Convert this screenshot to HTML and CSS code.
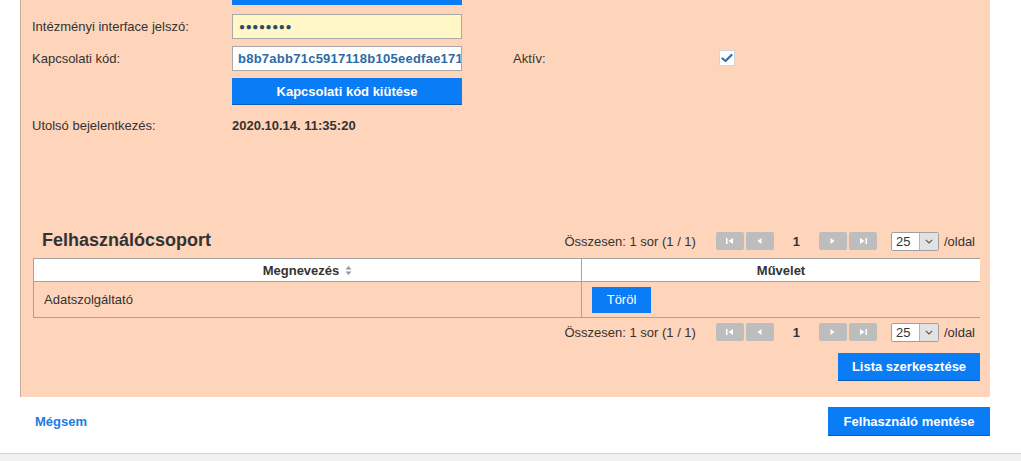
FILE: index.html
```html
<!DOCTYPE html>
<html lang="hu">
<head>
<meta charset="utf-8">
<title>Felhasználó</title>
<link rel="stylesheet" href="styles.css">
</head>
<body>
<div class="panel">
  <div class="form">
    <div class="row row-top">
      <div class="label"></div>
      <div class="top-btn"></div>
    </div>
    <div class="row row-pw">
      <div class="label">Intézményi interface jelszó:</div>
      <div class="input input-pw">●●●●●●●●</div>
    </div>
    <div class="row row-code">
      <div class="label">Kapcsolati kód:</div>
      <div class="input input-code">b8b7abb71c5917118b105eedfae171a</div>
      <div class="label label-aktiv">Aktív:</div>
      <div class="checkbox"><svg width="12" height="10" viewBox="0 0 12 10"><path d="M1.5 5.5 L4.5 8 L10.5 2" fill="none" stroke="#2f6db5" stroke-width="2.2" stroke-linecap="round" stroke-linejoin="round"/></svg></div>
    </div>
    <div class="row row-btn">
      <div class="label"></div>
      <div class="btn btn-wide">Kapcsolati kód kiütése</div>
    </div>
    <div class="row row-last">
      <div class="label">Utolsó bejelentkezés:</div>
      <div class="value">2020.10.14. 11:35:20</div>
    </div>
  </div>

  <div class="group">
    <div class="group-head">
      <h2 class="title">Felhasználócsoport</h2>
      <div class="pager">
        <span class="total">Összesen: 1 sor (1 / 1)</span>
        <span class="pbtns">
          <span class="pbtn"><svg width="8" height="6" viewBox="0 0 8 6"><rect x="0" y="0" width="1.5" height="6" fill="#fff"/><path d="M7 0 L2.5 3 L7 6 Z" fill="#fff"/></svg></span>
          <span class="pbtn"><svg width="5" height="6" viewBox="0 0 5 6"><path d="M4.5 0 L0.5 3 L4.5 6 Z" fill="#fff"/></svg></span>
        </span>
        <span class="page">1</span>
        <span class="pbtns">
          <span class="pbtn"><svg width="5" height="6" viewBox="0 0 5 6"><path d="M0.5 0 L4.5 3 L0.5 6 Z" fill="#fff"/></svg></span>
          <span class="pbtn"><svg width="8" height="6" viewBox="0 0 8 6"><path d="M1 0 L5.5 3 L1 6 Z" fill="#fff"/><rect x="6.5" y="0" width="1.5" height="6" fill="#fff"/></svg></span>
        </span>
        <span class="select"><span class="sel-val">25</span><span class="sel-arrow"><svg width="8" height="5" viewBox="0 0 8 5"><path d="M0.8 0.8 L4 4 L7.2 0.8" fill="none" stroke="#555" stroke-width="1.1"/></svg></span></span>
        <span class="per">/oldal</span>
      </div>
    </div>

    <div class="table">
      <div class="tr th">
        <div class="td col1">Megnevezés <svg class="sort" width="7" height="9" viewBox="0 0 7 9"><path d="M3.5 0 L6.5 3.5 L0.5 3.5 Z M0.5 5.5 L6.5 5.5 L3.5 9 Z" fill="#999"/></svg></div>
        <div class="td col2">Művelet</div>
      </div>
      <div class="tr trow">
        <div class="td col1">Adatszolgáltató</div>
        <div class="td col2"><span class="btn btn-small">Töröl</span></div>
      </div>
    </div>

    <div class="pager pager-bottom">
      <span class="total">Összesen: 1 sor (1 / 1)</span>
      <span class="pbtns">
        <span class="pbtn"><svg width="8" height="6" viewBox="0 0 8 6"><rect x="0" y="0" width="1.5" height="6" fill="#fff"/><path d="M7 0 L2.5 3 L7 6 Z" fill="#fff"/></svg></span>
        <span class="pbtn"><svg width="5" height="6" viewBox="0 0 5 6"><path d="M4.5 0 L0.5 3 L4.5 6 Z" fill="#fff"/></svg></span>
      </span>
      <span class="page">1</span>
      <span class="pbtns">
        <span class="pbtn"><svg width="5" height="6" viewBox="0 0 5 6"><path d="M0.5 0 L4.5 3 L0.5 6 Z" fill="#fff"/></svg></span>
        <span class="pbtn"><svg width="8" height="6" viewBox="0 0 8 6"><path d="M1 0 L5.5 3 L1 6 Z" fill="#fff"/><rect x="6.5" y="0" width="1.5" height="6" fill="#fff"/></svg></span>
      </span>
      <span class="select"><span class="sel-val">25</span><span class="sel-arrow"><svg width="8" height="5" viewBox="0 0 8 5"><path d="M0.8 0.8 L4 4 L7.2 0.8" fill="none" stroke="#555" stroke-width="1.1"/></svg></span></span>
      <span class="per">/oldal</span>
    </div>

    <div class="list-actions">
      <span class="btn btn-list">Lista szerkesztése</span>
    </div>
  </div>
</div>

<div class="actions">
  <a class="cancel" href="#">Mégsem</a>
  <span class="btn btn-save">Felhasználó mentése</span>
</div>

<div class="footer"></div>
</body>
</html>
```

FILE: styles.css
```css
* { box-sizing: border-box; }

html, body {
  margin: 0;
  padding: 0;
  background: #ffffff;
  font-family: "Liberation Sans", Arial, sans-serif;
  font-size: 13px;
  color: #333;
}

.panel {
  margin-left: 20px;
  width: 970px;
  height: 397px;
  background: #fed5bb;
  border-left: 1px solid #c7ab98;
}

.form {
  display: flex;
  flex-direction: column;
  gap: 7px;
  padding-left: 11px;
}

.row {
  display: flex;
  align-items: center;
}

.label {
  width: 200px;
  color: #333;
}

.row-top { height: 5px; margin-bottom: 2px; }
.top-btn {
  width: 230px;
  height: 5px;
  background: #0a7cf6;
}

.input {
  width: 230px;
  height: 25px;
  border: 1px solid #a9a9a9;
  padding: 0 5px;
  line-height: 23px;
  white-space: nowrap;
  overflow: hidden;
}

.input-pw {
  background: #fff8c6;
  color: #274a6b;
  font-size: 10px;
  letter-spacing: 0.6px;
  padding-left: 6px;
}

.input-code {
  background: #ffffff;
  color: #2d6aa6;
  font-weight: bold;
  font-size: 13px;
  letter-spacing: 0.25px;
}

.label-aktiv {
  margin-left: 51px;
  flex: 0 0 206px;
  color: #333;
}

.checkbox {
  width: 16px;
  height: 16px;
  background: #fff;
  border: 1px solid #d4d4d4;
  display: flex;
  align-items: center;
  justify-content: center;
  margin-top: -1px;
}

.btn {
  display: inline-flex;
  align-items: center;
  justify-content: center;
  background: #0a7cf6;
  color: #fff;
  font-weight: bold;
  font-size: 13px;
}

.btn-wide {
  width: 230px;
  height: 27px;
  border-bottom: 1px solid #0a5fba;
}

.row-last { margin-top: 6px; }
.value { font-weight: bold; color: #333; }

.group {
  margin-left: 12px;
  width: 947px;
  margin-top: 94px;
}

.group-head {
  display: flex;
  align-items: center;
  justify-content: space-between;
  height: 28px;
  padding-left: 9px;
}

.title {
  margin: 0;
  margin-top: -2px;
  font-size: 18px;
  font-weight: bold;
  color: #333;
}

.pager {
  display: flex;
  align-items: center;
  padding-right: 5px;
  color: #333;
}

.total { margin-right: 20px; }

.pbtns { display: flex; gap: 2px; }

.pbtn {
  width: 28px;
  height: 18px;
  background: #bdbdbd;
  border-radius: 2px;
  display: flex;
  align-items: center;
  justify-content: center;
}

.page {
  width: 45px;
  text-align: center;
  font-weight: bold;
  color: #333;
}

.select {
  display: flex;
  width: 48px;
  height: 19px;
  margin-left: 14px;
  border: 1px solid #a0a0a0;
  border-radius: 2px;
  background: #fff;
}

.sel-val {
  flex: 1;
  line-height: 17px;
  padding-left: 4px;
  color: #333;
}

.sel-arrow {
  width: 19px;
  background: #e2e2e2;
  border-left: 1px solid #b5b5b5;
  display: flex;
  align-items: center;
  justify-content: center;
}

.per { margin-left: 5px; }

.table {
  margin-top: 3px;
  border-left: 1px solid #a3a3a3;
  border-top: 1px solid #a3a3a3;
}

.tr { display: flex; }

.td { border-bottom: 1px solid #a3a3a3; }

.col1 { width: 548px; border-right: 1px solid #a3a3a3; }
.col2 { flex: 1; }

.th .td {
  height: 23px;
  background: #fff;
  font-weight: bold;
  display: flex;
  align-items: center;
  justify-content: center;
  gap: 4px;
}

.sort { margin-left: 2px; }

.trow .td {
  height: 36px;
  display: flex;
  align-items: center;
}

.trow .col1 { padding-left: 10px; }
.trow .col2 { padding-left: 10px; }

.btn-small {
  width: 59px;
  height: 26px;
  font-weight: normal;
}

.pager-bottom {
  justify-content: flex-end;
  height: 28px;
}

.list-actions {
  display: flex;
  justify-content: flex-end;
  margin-top: 7px;
}

.btn-list {
  width: 142px;
  height: 28px;
  border-bottom: 1px solid #0a5fba;
}

.actions {
  display: flex;
  align-items: center;
  justify-content: space-between;
  width: 990px;
  padding-left: 35px;
  margin-top: 10px;
  height: 29px;
}

.cancel {
  color: #1a7be0;
  font-weight: bold;
  text-decoration: none;
}

.btn-save {
  width: 162px;
  height: 29px;
  border-bottom: 1px solid #0a5fba;
}

.footer {
  margin-top: 17px;
  height: 10px;
  background: #f0f0f0;
  border-top: 1px solid #d3d3d3;
}
```
